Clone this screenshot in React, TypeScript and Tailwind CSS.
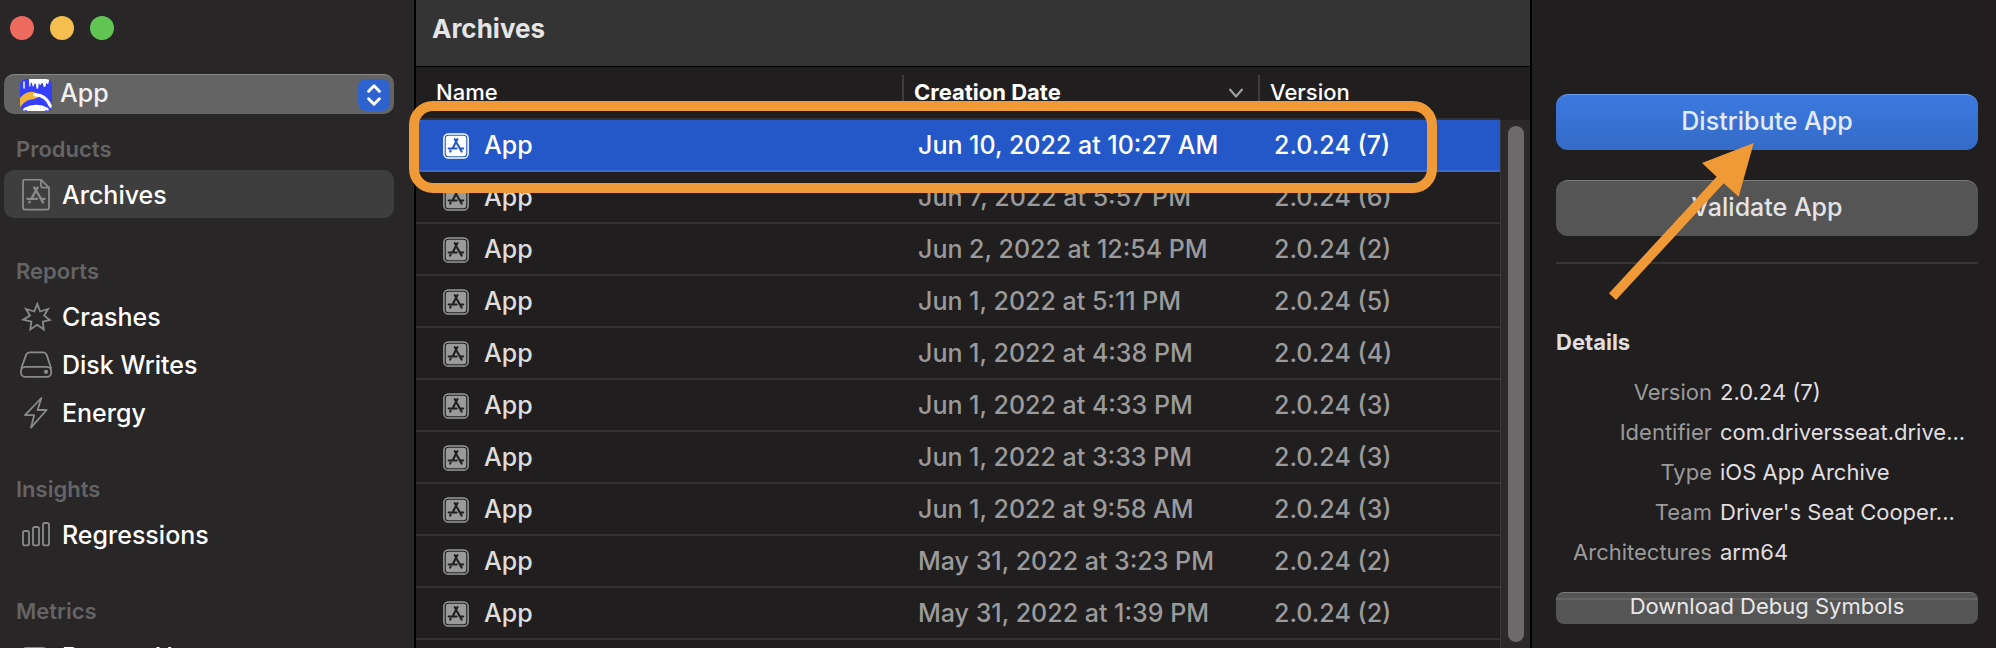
import React from "react";

type Archive = { name: string; date: string; version: string };

const archives: Archive[] = [
  { name: "App", date: "Jun 10, 2022 at 10:27 AM", version: "2.0.24 (7)" },
  { name: "App", date: "Jun 7, 2022 at 5:57 PM", version: "2.0.24 (6)" },
  { name: "App", date: "Jun 2, 2022 at 12:54 PM", version: "2.0.24 (2)" },
  { name: "App", date: "Jun 1, 2022 at 5:11 PM", version: "2.0.24 (5)" },
  { name: "App", date: "Jun 1, 2022 at 4:38 PM", version: "2.0.24 (4)" },
  { name: "App", date: "Jun 1, 2022 at 4:33 PM", version: "2.0.24 (3)" },
  { name: "App", date: "Jun 1, 2022 at 3:33 PM", version: "2.0.24 (3)" },
  { name: "App", date: "Jun 1, 2022 at 9:58 AM", version: "2.0.24 (3)" },
  { name: "App", date: "May 31, 2022 at 3:23 PM", version: "2.0.24 (2)" },
  { name: "App", date: "May 31, 2022 at 1:39 PM", version: "2.0.24 (2)" },
];

const details = [
  { label: "Version", value: "2.0.24 (7)" },
  { label: "Identifier", value: "com.driversseat.drive..." },
  { label: "Type", value: "iOS App Archive" },
  { label: "Team", value: "Driver's Seat Cooper..." },
  { label: "Architectures", value: "arm64" },
];

function NavIcon({ children }: { children: React.ReactNode }) {
  return (
    <svg
      viewBox="0 0 34 32"
      className="mb-0.5 h-8 w-[34px] shrink-0"
      fill="none"
      stroke="#8b8a8b"
      strokeWidth="1.8"
      strokeLinejoin="round"
      strokeLinecap="round"
      aria-hidden="true"
    >
      {children}
    </svg>
  );
}

const ArchiveDocIcon = () => (
  <NavIcon>
    <path d="M5 0H21L29 8V28Q29 30 27 30H5Q3 30 3 28V2Q3 0 5 0Z" transform="translate(0 0.6)" />
    <path d="M21 1V6.6Q21 8.6 23 8.6H29" />
    <g strokeWidth="2.3">
      <path d="M17.6 8.4L11.6 19.4M14.2 8.4L15.4 10.4M16.8 12.6L23 23.4M7.4 19.8H17.2M21.6 19.8H24.6M9.7 22.8L9.3 23.4" />
    </g>
  </NavIcon>
);

const CrashIcon = () => (
  <NavIcon>
    <path
      strokeLinejoin="miter"
      d="M17.3 3L20.1 10.5L28 8L24.2 14.6L30 19L22.8 20.7L23.8 28.6L17.2 23.8L10.3 28.4L11.4 20.7L3.2 18.6L10 14.6L6 8L14.3 10.5Z"
    />
  </NavIcon>
);

const DiskIcon = () => (
  <NavIcon>
    <path d="M1.4 19L6.2 5.6Q7.2 3.4 9.6 3.4H23.2Q25.6 3.4 26.6 5.6L31 19" />
    <rect x="1" y="17.8" width="30.2" height="10" rx="4.4" />
    <circle cx="26" cy="22.8" r="1.2" fill="#8b8a8b" />
  </NavIcon>
);

const BoltIcon = () => (
  <NavIcon>
    <path d="M21.4 1L5 18.2H14.2L11 30.6L26.6 13H17.6Z" />
  </NavIcon>
);

const BarsIcon = () => (
  <NavIcon>
    <rect x="3" y="12" width="6" height="14.4" rx="1.6" />
    <rect x="13" y="8" width="6" height="18.4" rx="1.6" />
    <rect x="23" y="4" width="6" height="22.4" rx="1.6" />
  </NavIcon>
);

const BatteryIcon = () => (
  <NavIcon>
    <rect x="2" y="7" width="25" height="18" rx="4" fill="#8b8a8b" />
    <path d="M30 13V19" />
  </NavIcon>
);

const groups = [
  { title: "Products", items: [{ label: "Archives", Icon: ArchiveDocIcon, active: true }] },
  {
    title: "Reports",
    items: [
      { label: "Crashes", Icon: CrashIcon, active: false },
      { label: "Disk Writes", Icon: DiskIcon, active: false },
      { label: "Energy", Icon: BoltIcon, active: false },
    ],
  },
  { title: "Insights", items: [{ label: "Regressions", Icon: BarsIcon, active: false }] },
  { title: "Metrics", items: [{ label: "Battery Usage", Icon: BatteryIcon, active: false }] },
];

function ProductIcon() {
  return (
    <svg viewBox="0 0 32 32" className="size-8 shrink-0 rounded-md" aria-hidden="true">
      <rect width="32" height="32" fill="#353ffa" />
      <path
        fill="#fff"
        d="M9 0H29Q29 5 27.6 5Q26.4 5 26.2 3.6Q25.8 8 24.6 8Q23.2 8 23 4.4L21.4 4Q21.2 6 20.4 6Q19.4 6 19.2 4.4L18.6 4.6Q18.4 10 17.4 10Q16.2 10 16 5L14.6 4.4Q14.2 7.4 13.2 7.4Q12.2 7.4 12 4L10.8 3.6Q10.6 8 9.8 8Q9 8 9 0Z"
      />
      <path d="M4 3V9" stroke="#fff" strokeWidth="1.4" strokeLinecap="round" />
      <path fill="#f0b43c" d="M0 19Q5 13 11 12.8Q17 13 19.4 17Q16 20.4 10.6 20.6Q4 22 0 29Z" />
      <path d="M14.6 15.8Q26 16 30.6 27.4" fill="none" stroke="#fff" strokeWidth="3" strokeLinecap="round" />
      <path fill="#fff" d="M3.4 32Q2 30.4 4 29Q10 25.8 16.4 25.8Q22.6 25.8 28 29Q29.6 30.4 28.4 32Z" />
      <path fill="#353ffa" d="M4.6 32L5.8 30.4L7.4 32ZM25 32L26.4 30.4L27.6 32Z" />
    </svg>
  );
}

function ArchiveIcon({ selected }: { selected: boolean }) {
  const fg = selected ? "#ffffff" : "#9b9a9b";
  const bg = selected ? "#2458c9" : "#201e1f";
  return (
    <svg viewBox="0 0 26 26" className="size-[26px] shrink-0" fill="none" aria-hidden="true">
      <rect x="0.9" y="0.9" width="24.2" height="24.2" rx="4.4" stroke={fg} strokeWidth="1.5" />
      <rect x="2.8" y="2.8" width="20.4" height="20.4" rx="2.6" fill={fg} />
      <path
        d="M14.4 6.2L9.6 15.4M11.8 6.2L12.8 8M14 10.4L18.6 18.6M5.6 15.5H13.6M17.4 15.5H20.2M7.6 17.8L7.2 18.6"
        stroke={bg}
        strokeWidth="2.1"
        strokeLinecap="round"
      />
    </svg>
  );
}

function Sidebar() {
  return (
    <aside className="w-[416px] shrink-0 overflow-hidden border-r-2 border-black bg-[#282627] pr-5 pl-1">
      <div className="flex gap-4 pt-4 pl-1.5">
        <button aria-label="Close" className="size-6 rounded-full bg-[#ed6a5e]" />
        <button aria-label="Minimize" className="size-6 rounded-full bg-[#f5bf4f]" />
        <button aria-label="Zoom" className="size-6 rounded-full bg-[#61c554]" />
      </div>

      <div className="mt-[34px] flex h-10 items-center rounded-[10px] border-t border-[#8a898a] bg-[#656465] pr-1 pl-4">
        <ProductIcon />
        <select
          aria-label="Product"
          className="h-full flex-1 appearance-none bg-transparent pb-0.5 pl-2 text-[25px] font-medium text-[#f0f0f0] outline-none"
        >
          <option>App</option>
        </select>
        <svg viewBox="0 0 32 32" className="size-8 shrink-0 rounded-lg bg-[#2e63cf]" fill="none" aria-hidden="true">
          <path
            d="M10.6 12.2L16 6.8L21.4 12.2M10.6 19.8L16 25.2L21.4 19.8"
            stroke="#fff"
            strokeWidth="3"
            strokeLinecap="round"
            strokeLinejoin="round"
          />
        </svg>
      </div>

      <nav className="flex flex-col gap-8 pt-3.5">
        {groups.map((group) => (
          <section key={group.title}>
            <h2 className="h-[42px] pl-3 text-[22px] leading-[42px] font-semibold text-[#656465]">{group.title}</h2>
            {group.items.map(({ label, Icon, active }) => (
              <a
                key={label}
                href="#"
                className={
                  active
                    ? "flex h-12 items-center gap-2 rounded-[10px] bg-[#3f3e3f] pt-1 pl-4 text-[25px] font-medium text-white"
                    : "flex h-12 items-center gap-2 rounded-[10px] pt-1 pl-4 text-[25px] font-medium text-white"
                }
              >
                <Icon />
                {label}
              </a>
            ))}
          </section>
        ))}
      </nav>
    </aside>
  );
}

function ArchiveTable() {
  return (
    <table className="w-full table-fixed border-collapse text-left">
      <colgroup>
        <col />
        <col className="w-[356px]" />
        <col className="w-[242px]" />
      </colgroup>
      <thead>
        <tr className="h-[52px] border-b-2 border-[#333132] text-[22px] text-white">
          <th className="p-0 pl-5 font-medium">Name</th>
          <th className="p-0 font-bold">
            <button className="flex h-9 w-full items-center justify-between border-l-2 border-[#3e3c3d] pr-3.5 pl-2.5">
              Creation Date
              <svg viewBox="0 0 16 12" className="h-3 w-4" fill="none" aria-hidden="true">
                <path
                  d="M2 2.5L8 9.5L14 2.5"
                  stroke="#a5a4a5"
                  strokeWidth="2"
                  strokeLinecap="round"
                  strokeLinejoin="round"
                />
              </svg>
            </button>
          </th>
          <th className="p-0 font-medium">
            <div className="flex h-9 items-center border-l-2 border-[#3e3c3d] pl-2.5">Version</div>
          </th>
        </tr>
      </thead>
      <tbody>
        {archives.map((archive, index) => {
          const selected = index === 0;
          return (
            <tr
              key={archive.date}
              className={
                selected
                  ? "h-[52px] border-b-2 border-[#3a68cf] bg-[#2458c9] text-[25px] font-medium text-white"
                  : "h-[52px] border-b-2 border-[#333132] text-[25px] font-medium text-[#9b9a9b]"
              }
            >
              <td className="p-0 pt-0.5 pl-[27px]">
                <div className="flex items-center gap-[15px]">
                  <ArchiveIcon selected={selected} />
                  <span className={selected ? "text-white" : "text-[#dedddd]"}>{archive.name}</span>
                </div>
              </td>
              <td className="p-0 pt-0.5 pl-4 whitespace-nowrap">{archive.date}</td>
              <td className="p-0 pt-0.5 pl-4 whitespace-nowrap">{archive.version}</td>
            </tr>
          );
        })}
      </tbody>
    </table>
  );
}

function Inspector() {
  return (
    <aside className="relative w-[466px] shrink-0 border-l-2 border-black bg-[#201e1f] pt-[94px] pr-[18px] pl-6">
      <div className="flex flex-col gap-[30px]">
        <button className="h-14 rounded-xl border-t border-[#6f9fee] bg-linear-to-b from-[#3c79e0] to-[#346bc6] pb-0.5 text-[25px] font-medium text-[#e3ebfa]">
          Distribute App
        </button>
        <button className="h-14 rounded-xl border-t border-[#7b7a7b] bg-[#565556] pb-0.5 text-[25px] font-medium text-[#e4e3e4]">
          Validate App
        </button>
      </div>
      <hr className="mt-[26px] border-t-2 border-[#363435]" />

      <h2 className="mt-[62px] text-[22px] leading-8 font-bold text-[#e0dfe0]">Details</h2>
      <dl className="mt-3.5 grid grid-cols-[156px_1fr] gap-x-2 text-[22px] leading-10">
        {details.map(({ label, value }) => (
          <React.Fragment key={label}>
            <dt className="text-right text-[#9b9a9b]">{label}</dt>
            <dd className="whitespace-nowrap text-[#e0dfe0]">{value}</dd>
          </React.Fragment>
        ))}
      </dl>
      <button className="mt-5 flex h-8 w-full flex-col rounded-lg border-t border-[#7b7a7b] bg-[#565556] text-[22px] leading-7 text-[#e9e8e9]">
        <span className="mt-[5px] h-0.5 w-full bg-[#656465]" />
        <span className="-mt-2 w-full text-center">Download Debug Symbols</span>
      </button>

      <svg
        viewBox="0 0 146 158"
        className="pointer-events-none absolute top-[143px] left-[77px] h-[158px] w-[146px]"
        aria-hidden="true"
      >
        <path fill="#f09937" d="M144.7 0L129.7 53.7L114.7 40.3L7 157L0 150.3L107.7 33.7L93 20Z" />
      </svg>
    </aside>
  );
}

export default function App() {
  return (
    <div className="flex h-screen overflow-hidden bg-[#201e1f] font-[Inter,'Liberation_Sans',sans-serif]">
      <Sidebar />
      <main className="relative flex min-w-0 flex-1 flex-col">
        <header className="h-[67px] shrink-0 border-b border-black bg-[#343434] pt-[13px] pl-4">
          <h1 className="text-[26px] leading-8 font-bold text-[#e6e5e6]">Archives</h1>
        </header>
        <div className="flex min-h-0 flex-1">
          <div className="min-w-0 flex-1">
            <ArchiveTable />
          </div>
          <div className="mt-[53px] flex w-[30px] shrink-0 justify-center border-l border-[#3a3839] bg-[#2b292a] pt-1.5 pb-1.5">
            <div className="w-4 rounded-full bg-[#6c6a6b]" />
          </div>
        </div>
        <div className="pointer-events-none absolute top-[101px] right-[93px] -left-[7px] h-[92px] rounded-[24px] border-[10px] border-[#f09937]" />
      </main>
      <Inspector />
    </div>
  );
}
